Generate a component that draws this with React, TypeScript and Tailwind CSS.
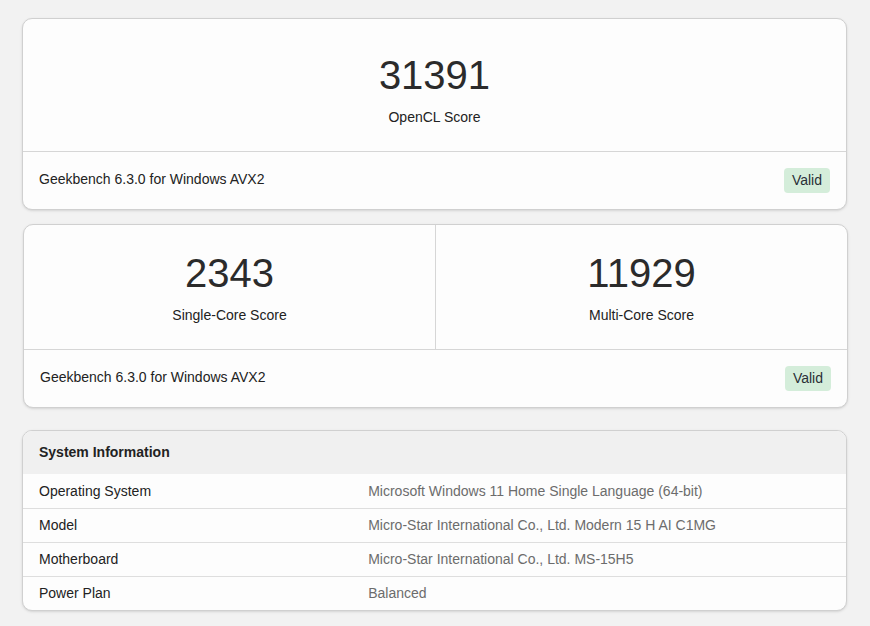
import React from 'react';

const font = { fontFamily: '"Liberation Sans", Arial, sans-serif' };

const Valid = () => (
  <span className="rounded-[4px] bg-[#d4edda] px-[8px] py-[3px] text-[14px] leading-[19px] text-[#2a2f36]">
    Valid
  </span>
);

const Footer = () => (
  <div className="flex h-[58px] items-center justify-between border-t border-[#d6d6d6] px-4">
    <span className="-mt-[3px] text-[14px] text-[#222]">Geekbench 6.3.0 for Windows AVX2</span>
    <Valid />
  </div>
);

const Score = ({ value, label, top }: { value: string; label: string; top: string }) => (
  <div className={`flex flex-1 flex-col items-center pb-6 ${top}`}>
    <div className="text-[40px] leading-[48px] text-[#2b2b2b]">{value}</div>
    <div className="mt-2 text-[14px] leading-[20px] text-[#222]">{label}</div>
  </div>
);

const rows = [
  ['Operating System', 'Microsoft Windows 11 Home Single Language (64-bit)'],
  ['Model', 'Micro-Star International Co., Ltd. Modern 15 H AI C1MG'],
  ['Motherboard', 'Micro-Star International Co., Ltd. MS-15H5'],
  ['Power Plan', 'Balanced'],
];

const App = () => {
  return (
    <div className="min-h-[626px] bg-[#f2f2f2] px-[22px] pt-[18px]" style={font}>
      <div className="w-[825px] overflow-hidden rounded-[10px] border border-[#d0d0d0] bg-[#fdfdfd] shadow-sm">
        <div className="flex">
          <Score value="31391" label="OpenCL Score" top="pt-8" />
        </div>
        <Footer />
      </div>

      <div className="ml-px mt-[14px] w-[825px] overflow-hidden rounded-[10px] border border-[#d0d0d0] bg-[#fdfdfd] shadow-sm">
        <div className="flex">
          <Score value="2343" label="Single-Core Score" top="pt-6" />
          <div className="w-px bg-[#d6d6d6]" />
          <Score value="11929" label="Multi-Core Score" top="pt-6" />
        </div>
        <Footer />
      </div>

      <div className="mt-[22px] w-[825px] overflow-hidden rounded-[10px] border border-[#d0d0d0] bg-[#fdfdfd] shadow-sm">
        <div className="flex h-[43px] items-center bg-[#f0f0f0] px-4 text-[14px] font-bold text-[#222]">
          System Information
        </div>
        {rows.map(([k, v], i) => (
          <div
            key={k}
            className={`grid h-[34px] grid-cols-[40%_60%] items-center text-[14px] ${i > 0 ? 'border-t border-[#dedede]' : ''}`}
          >
            <div className="px-4 text-[#222]">{k}</div>
            <div className="px-4 text-[#6c6c6c]">{v}</div>
          </div>
        ))}
      </div>
    </div>
  );
};

export default App;
